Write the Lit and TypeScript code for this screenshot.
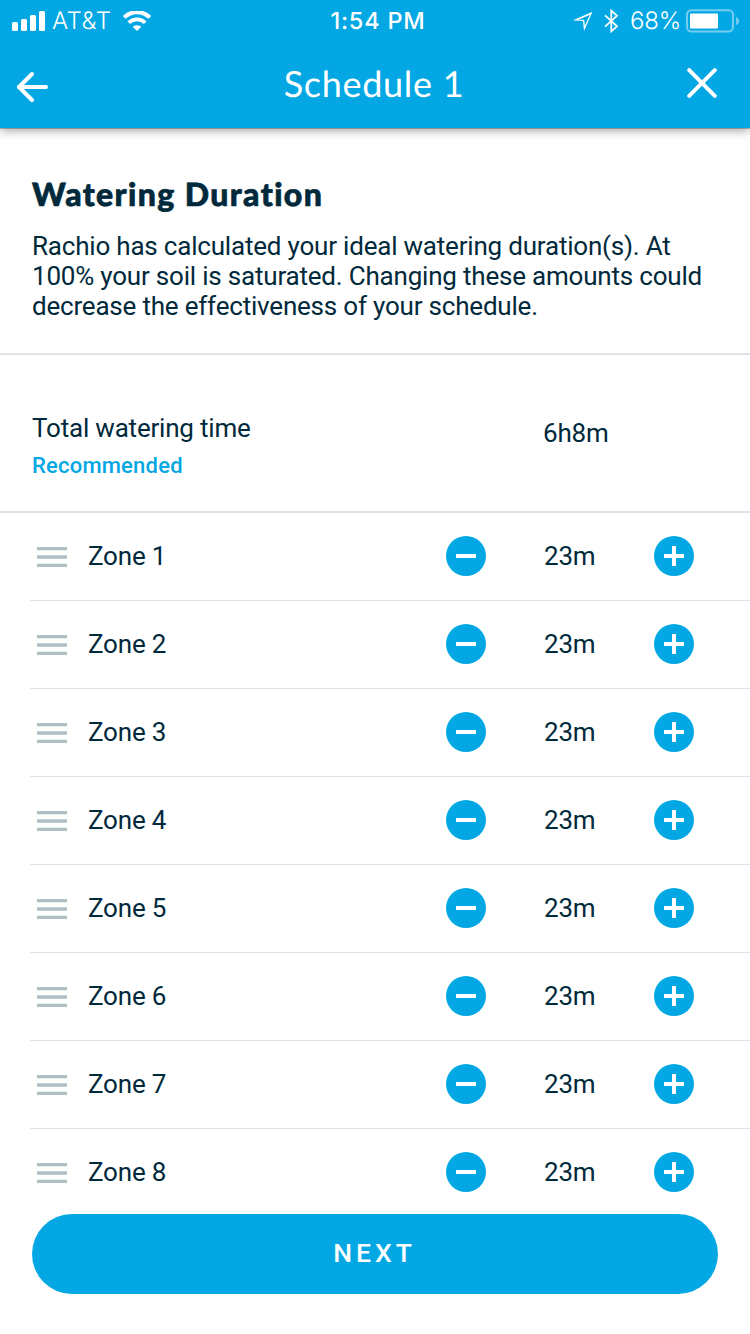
import { LitElement, html, css } from "lit";
import { customElement, property, state } from "lit/decorators.js";

@customElement("status-bar")
class StatusBar extends LitElement {
  static styles = css`
    :host { display: grid; grid-template-columns: 1fr auto 1fr; height: 40px; color: #fff; font-family: Inter, "Liberation Sans", sans-serif; text-rendering: geometricPrecision; }
    .side { display: flex; align-items: center; }
    .left { padding-left: 12px; }
    .right { justify-content: flex-end; padding-right: 11px; }
    svg { display: block; flex: none; }
    .carrier { font-size: 24px; font-weight: 300; line-height: 40px; margin: 0 0 0 7px; letter-spacing: 0.5px; width: 59px; white-space: nowrap; }
    .wifi { margin-left: 12px; }
    .time { font-size: 23.5px; font-weight: 550; line-height: 42px; letter-spacing: 0.8px; padding-left: 6px; }
    .bt { margin-left: 11px; }
    .pct { font-size: 24px; font-weight: 300; line-height: 40px; margin: 0 5px 0 11px; letter-spacing: -0.2px; white-space: nowrap; }
  `;
  render() {
    return html`
      <div class="side left">
        <svg width="33" height="20" viewBox="0 0 33 20" fill="#fff">
          <rect x="0" y="11" width="6" height="9" rx="1.5" />
          <rect x="9" y="8" width="6" height="12" rx="1.5" />
          <rect x="18" y="4" width="6" height="16" rx="1.5" />
          <rect x="27" y="0" width="6" height="20" rx="1.5" />
        </svg>
        <span class="carrier">AT&amp;T</span>
        <svg class="wifi" width="28" height="20" viewBox="0 0 28 20">
          <path d="M1.2 6.8 A18.2 18.2 0 0 1 26.8 6.8" fill="none" stroke="#fff" stroke-width="4" transform="translate(0 -.4)" />
          <path d="M5.8 11.4 A11.6 11.6 0 0 1 22.2 11.4" fill="none" stroke="#fff" stroke-width="3.7" transform="translate(0 .3)" />
          <path d="M9.7 15.8 A6.4 6.4 0 0 1 18.3 15.8 L14 20 Z" fill="#fff" />
        </svg>
      </div>
      <div class="time">1:54 PM</div>
      <div class="side right">
        <svg width="20" height="20" viewBox="0 0 20 20">
          <path d="M0 9.3 L19.5 0.8 L11 20 L10 10 Z M5.2 8.9 L11.2 8.8 L11.9 14.8 L16.9 3.8 Z" fill="#fff" fill-rule="evenodd" />
        </svg>
        <svg class="bt" width="15" height="24" viewBox="0 0 15 24">
          <path d="M1 6.3 L13 17.3 L7.3 22.4 V1.6 L13 6.7 L1 17.7" fill="none" stroke="#fff" stroke-width="1.8" />
        </svg>
        <span class="pct">68%</span>
        <svg width="53" height="24" viewBox="0 0 53 24">
          <rect x="1" y="1.2" width="46" height="21.3" rx="4.5" fill="none" stroke="#fff" stroke-opacity=".45" stroke-width="2" />
          <rect x="4" y="4.5" width="28" height="15" rx="1" fill="#fff" />
          <path d="M50 8 Q53 9 53 12 Q53 15 50 16 Z" fill="#fff" fill-opacity=".45" />
        </svg>
      </div>
    `;
  }
}

@customElement("nav-header")
class NavHeader extends LitElement {
  @property() heading = "";
  static styles = css`
    :host { display: grid; grid-template-columns: 1fr auto 1fr; height: 88px; color: #fff; }
    h1 { margin: 0; padding-right: 2px; font: 400 36px/86px Lato, sans-serif; letter-spacing: 0.7px; text-rendering: geometricPrecision; }
    button { border: 0; background: none; padding: 0; height: 88px; display: flex; }
    .back { padding: 31px 0 0 16px; }
    .close { justify-self: end; padding: 28px 33px 0 0; }
    svg { display: block; }
  `;
  render() {
    return html`
      <button class="back" aria-label="Back">
        <svg width="32" height="32" viewBox="0 0 32 32" fill="none" stroke="#fff" stroke-width="4" stroke-linecap="round">
          <path d="M16 3 L3 16 L16 29" stroke-linejoin="round" /><path d="M3 16 H30" />
        </svg>
      </button>
      <h1>${this.heading}</h1>
      <button class="close" aria-label="Close">
        <svg width="30" height="30" viewBox="0 0 30 30" fill="none" stroke="#fff" stroke-width="4" stroke-linecap="round">
          <path d="M2.2 2.2 L27.8 27.8 M27.8 2.2 L2.2 27.8" />
        </svg>
      </button>
    `;
  }
}

@customElement("zone-row")
class ZoneRow extends LitElement {
  @property() name = "";
  @property({ type: Number }) minutes = 0;
  static styles = css`
    :host { display: block; padding-left: 30px; }
    .row { display: grid; grid-template-columns: 58px 358px 98px 110px 40px; height: 86px; padding-bottom: 1px; align-items: center; border-bottom: 1px solid #dde3e6; }
    .grip { margin: 1px 0 0 7px; display: block; }
    .label { font: 400 26px/30px Roboto, sans-serif; color: #00293b; letter-spacing: -0.2px; }
    button { width: 40px; height: 40px; padding: 0; border: 0; border-radius: 50%; background: #02a7e3; display: block; }
    button svg { display: block; }
  `;
  private step(d: number) {
    this.minutes = Math.max(0, this.minutes + d);
  }
  render() {
    return html`
      <div class="row">
        <svg class="grip" width="30" height="20" viewBox="0 0 30 20" fill="#b0bec5">
          <rect y="0" width="30" height="3.3" /><rect y="8.3" width="30" height="3.5" /><rect y="16.7" width="30" height="3.3" />
        </svg>
        <span class="label">${this.name}</span>
        <button aria-label="Decrease" @click=${() => this.step(-1)}>
          <svg width="40" height="40" viewBox="0 0 40 40" fill="#fff"><rect x="10" y="18" width="20" height="4" /></svg>
        </button>
        <span class="label">${this.minutes}m</span>
        <button aria-label="Increase" @click=${() => this.step(1)}>
          <svg width="40" height="40" viewBox="0 0 40 40" fill="#fff"><rect x="10" y="18" width="20" height="4" /><rect x="18" y="10" width="4" height="20" /></svg>
        </button>
      </div>
    `;
  }
}

@customElement("app-root")
class AppRoot extends LitElement {
  @state() private zones = Array.from({ length: 8 }, (_, i) => ({ name: `Zone ${i + 1}`, minutes: 23 }));
  static styles = css`
    :host { display: flex; flex-direction: column; width: 750px; height: 1334px; overflow: hidden; background: #fff; color: #00293b; font: 400 26px/30px Roboto, sans-serif; letter-spacing: -0.2px; }
    .top { flex: none; height: 128px; background: #02a7e3; box-shadow: 0 1px 0 rgba(0, 0, 0, 0.25), 0 2px 10px rgba(0, 0, 0, 0.4); position: relative; }
    .intro { flex: none; box-sizing: border-box; height: 227px; padding: 46px 32px 0; border-bottom: 2px solid #dde3e6; }
    h2 { margin: 0 0 17px; font: 900 32px/40px Lato, sans-serif; letter-spacing: 1.4px; white-space: nowrap; text-rendering: geometricPrecision; -webkit-text-stroke: 0.7px #00293b; }
    p { margin: 0; white-space: nowrap; }
    .total { flex: none; box-sizing: border-box; height: 158px; padding: 58px 0 0 32px; border-bottom: 2px solid #dde3e6; display: grid; grid-template-columns: 511px 1fr; align-items: start; }
    .rec { font-size: 22px; font-weight: 500; line-height: 26px; color: #02a7e3; margin-top: 10px; letter-spacing: 0.2px; }
    .sum { padding-top: 5px; }
    .zones { flex: 1; min-height: 0; overflow: hidden; }
    .foot { flex: none; height: 120px; padding: 0 32px; display: flex; align-items: flex-start; }
    .next { flex: 1; height: 80px; border: 0; border-radius: 40px; background: #02a7e3; color: #fff; font: 500 26.5px/78px Roboto, sans-serif; letter-spacing: 4px; padding: 0 1px 2px 0; }
  `;
  render() {
    return html`
      <header class="top">
        <status-bar></status-bar>
        <nav-header heading="Schedule 1"></nav-header>
      </header>
      <section class="intro">
        <h2>Watering Duration</h2>
        <p>Rachio has calculated your ideal watering duration(s). At<br />100% your soil is saturated. Changing these amounts could<br />decrease the effectiveness of your schedule.</p>
      </section>
      <section class="total">
        <div>
          <div>Total watering time</div>
          <div class="rec">Recommended</div>
        </div>
        <div class="sum">6h8m</div>
      </section>
      <section class="zones">
        ${this.zones.map((z) => html`<zone-row .name=${z.name} .minutes=${z.minutes}></zone-row>`)}
      </section>
      <footer class="foot"><button class="next">NEXT</button></footer>
    `;
  }
}
